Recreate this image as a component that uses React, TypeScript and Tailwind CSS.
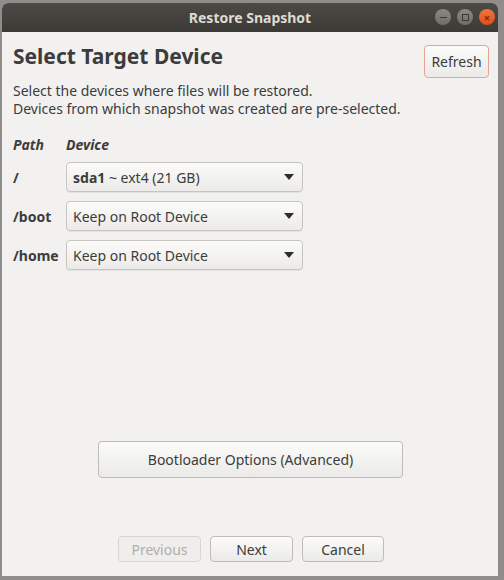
const font = { fontFamily: '"Noto Sans", "Open Sans", sans-serif' };

function Combo({ children }: { children: React.ReactNode }) {
  return (
    <div className="flex h-[30px] w-[237px] items-center justify-between rounded-[4px] border border-[#c8c5c0] bg-gradient-to-b from-[#fbfbfa] to-[#ecebe9] pl-[6px] pr-[8px] text-[14px] text-[#3c3c3c] shadow-[0_1px_0_rgba(0,0,0,0.06)]">
      <span>{children}</span>
      <svg width="10" height="6" viewBox="0 0 10 6">
        <path d="M0 0 L10 0 L5 6 Z" fill="#2e2e2e" />
      </svg>
    </div>
  );
}

function Btn({
  children,
  className,
  disabled,
}: {
  children: React.ReactNode;
  className: string;
  disabled?: boolean;
}) {
  return (
    <div
      className={
        "flex items-center justify-center rounded-[4px] border text-[14px] " +
        (disabled
          ? "border-[#d8d6d2] bg-[#efeeec] text-[#b0aeaa] "
          : "border-[#bfbcb7] bg-gradient-to-b from-[#fbfbfa] to-[#ebeae8] text-[#3c3c3c] ") +
        className
      }
    >
      {children}
    </div>
  );
}

export default function App() {
  return (
    <div className="h-[580px] w-[504px] bg-[#8e8d8a] pt-[3px]" style={font}>
      <div className="ml-[2px] flex h-[573px] w-[496px] flex-col overflow-hidden rounded-t-[6px] bg-[#f2f1f0]">
        {/* title bar */}
        <div className="relative flex h-[29px] shrink-0 items-center justify-center bg-gradient-to-b from-[#4b4a45] to-[#3b3a36]">
          <span className="text-[14px] font-bold text-[#dfdbd2]">Restore Snapshot</span>
          <div className="absolute right-[3px] top-[6px] flex gap-[6px]">
            <div className="flex h-[16px] w-[16px] items-center justify-center rounded-full bg-gradient-to-b from-[#8a8985] to-[#6e6d69]">
              <div className="h-[1px] w-[7px] bg-[#3b3a36]" />
            </div>
            <div className="flex h-[16px] w-[16px] items-center justify-center rounded-full bg-gradient-to-b from-[#8a8985] to-[#6e6d69]">
              <div className="h-[7px] w-[7px] border border-[#3b3a36]" />
            </div>
            <div className="flex h-[16px] w-[16px] items-center justify-center rounded-full bg-gradient-to-b from-[#f3743f] to-[#df4d16] text-[11px] font-bold leading-none text-[#7a2a0c]">
              ×
            </div>
          </div>
        </div>

        {/* body */}
        <div className="flex flex-1 flex-col px-[11px]">
          <div className="flex items-start justify-between pt-[10px]">
            <h1 className="mt-[1px] text-[21px] font-bold leading-[26px] text-[#3c3c3c]">
              Select Target Device
            </h1>
            <Btn className="mr-[-2px] mt-[3px] h-[33px] w-[65px] border-[#e6a58c]">Refresh</Btn>
          </div>
          <div className="mt-[4px] text-[14px] leading-[18px] text-[#3c3c3c]">
            <p>Select the devices where files will be restored.</p>
            <p>Devices from which snapshot was created are pre-selected.</p>
          </div>

          <div className="mt-[19px] grid grid-cols-[53px_1fr] items-center gap-y-[9px] text-[14px] text-[#3c3c3c]">
            <span className="font-bold italic leading-[16px]">Path</span>
            <span className="font-bold italic leading-[16px]">Device</span>
            <span className="font-bold">/</span>
            <Combo>
              <b>sda1</b> ~ ext4 (21 GB)
            </Combo>
            <span className="font-bold">/boot</span>
            <Combo>Keep on Root Device</Combo>
            <span className="font-bold">/home</span>
            <Combo>Keep on Root Device</Combo>
          </div>

          <div className="flex flex-1 flex-col items-center justify-end pb-[58px]">
            <Btn className="ml-[1px] h-[37px] w-[305px]">Bootloader Options (Advanced)</Btn>
          </div>
          <div className="flex justify-center gap-[9px] pb-[14px] pl-[2px]">
            <Btn disabled className="h-[26px] w-[83px]">Previous</Btn>
            <Btn className="h-[26px] w-[83px]">Next</Btn>
            <Btn className="h-[26px] w-[82px]">Cancel</Btn>
          </div>
        </div>
      </div>
    </div>
  );
}
